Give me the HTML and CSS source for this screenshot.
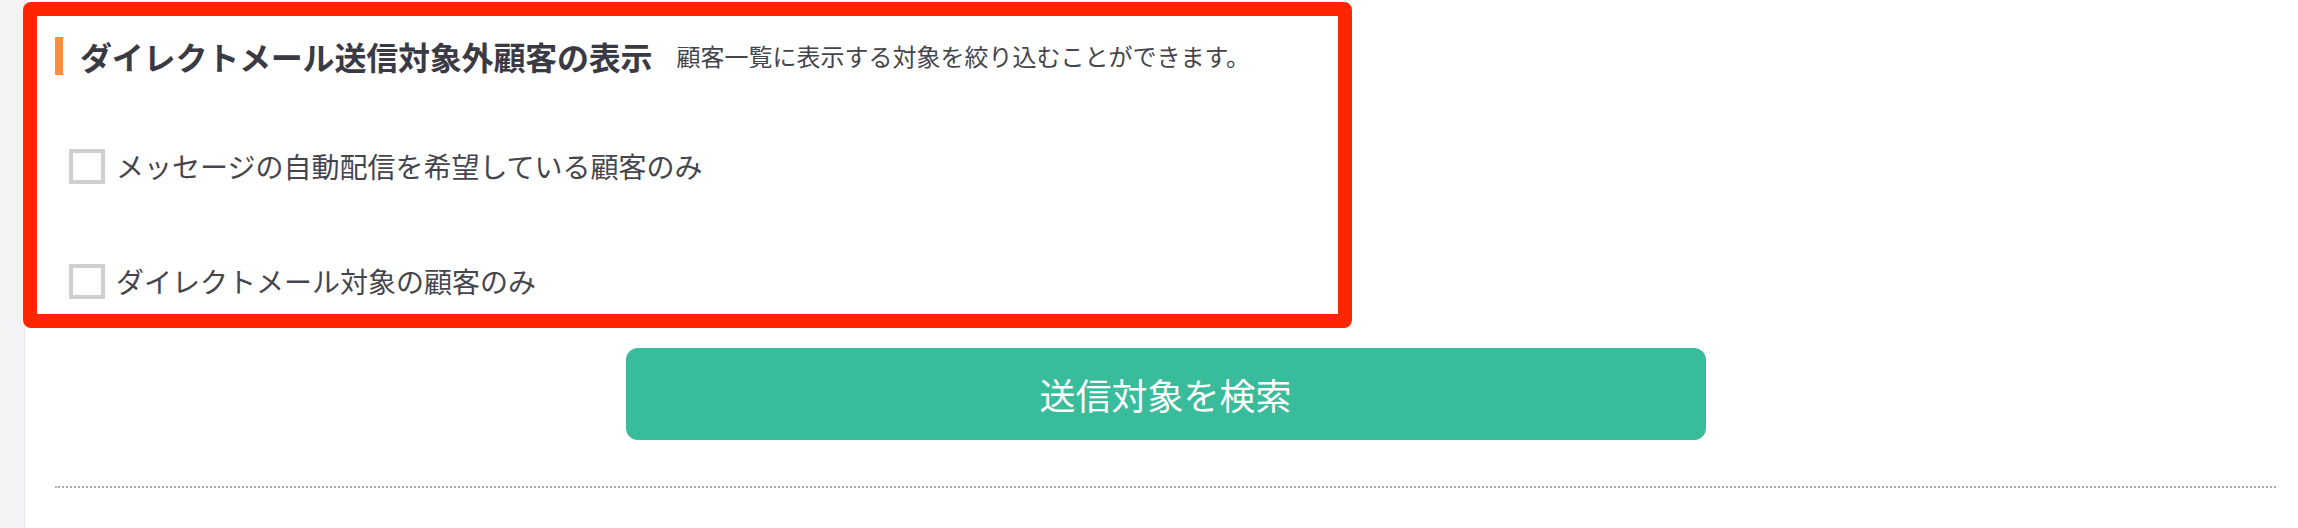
FILE: index.html
```html
<!DOCTYPE html>
<html lang="ja">
<head>
  <meta charset="UTF-8" />
  <meta name="viewport" content="width=device-width, initial-scale=1" />
  <title>顧客検索</title>
  <link rel="stylesheet" href="styles.css">
</head>
<body>

  <div class="page">
    <div class="side-strip"></div>

    <main class="main">
      <section class="filter-section">
        <div class="section-head">
          <span class="head-bar"></span>
          <h2 class="head-title">ダイレクトメール送信対象外顧客の表示</h2>
          <p class="head-note">顧客一覧に表示する対象を絞り込むことができます。</p>
        </div>

        <label class="check-row">
          <input type="checkbox" id="autoMessageOnly" />
          <span class="check-box"></span>
          <span class="check-text">メッセージの自動配信を希望している顧客のみ</span>
        </label>

        <label class="check-row">
          <input type="checkbox" id="directMailOnly" />
          <span class="check-box"></span>
          <span class="check-text">ダイレクトメール対象の顧客のみ</span>
        </label>

        <!-- annotation frame drawn over the section -->
        <div class="highlight-frame"></div>
      </section>

      <div class="search-wrap">
        <button class="search-btn" id="searchBtn">送信対象を検索</button>
      </div>

      <hr class="dotted-line" />
    </main>
  </div>

</body>
</html>
```

FILE: styles.css
```css
body {
  margin: 0;
  font-family: "Noto Sans CJK JP", "Noto Sans", sans-serif;
  background: #ffffff;
  color: #3d3d45;
}
.page {
  display: flex;
  min-height: 528px;
}
.side-strip {
  width: 24px;
  flex-shrink: 0;
  background: #f3f3f5;
  border-right: 1px solid #e6e6e9;
}
.main {
  flex: 1;
  padding: 0 22px 0 30px;
  background: #fff;
}
.filter-section {
  position: relative;
  padding-top: 37px;
}
.section-head {
  display: flex;
  align-items: center;
  height: 38px;
}
.head-bar {
  width: 8px;
  height: 38px;
  background: #ff8b3d;
  margin-right: 17px;
}
.head-title {
  margin: 0;
  font-size: 32px;
  font-weight: 700;
  line-height: 38px;
  color: #3a3a44;
  letter-spacing: -0.2px;
}
.head-note {
  margin: 0 0 0 24px;
  font-size: 24px;
  line-height: 38px;
  color: #45454d;
}
.check-row {
  display: flex;
  align-items: center;
  height: 40px;
  margin-left: 14px;
  cursor: pointer;
}
.section-head + .check-row {
  margin-top: 71px;
}
.check-row + .check-row {
  margin-top: 75px;
}
.check-row input {
  display: none;
}
.check-box {
  width: 36px;
  height: 35px;
  box-sizing: border-box;
  border: 4px solid #cfcfcf;
  background: #fff;
  margin-right: 11px;
}
.check-row input:checked + .check-box {
  background: #38bc9c;
  border-color: #38bc9c;
}
.check-text {
  font-size: 28px;
  line-height: 40px;
  color: #45454d;
}
.highlight-frame {
  position: absolute;
  left: -32px;
  top: 2px;
  width: 1329px;
  height: 326px;
  box-sizing: border-box;
  border: 14px solid #ff2600;
  border-radius: 8px;
  pointer-events: none;
}
.search-wrap {
  display: flex;
  justify-content: center;
  margin-top: 47px;
}
.search-btn {
  width: 1080px;
  height: 92px;
  border: none;
  border-radius: 12px;
  background: #38bc9c;
  color: #fff;
  font-family: "Noto Sans CJK JP", sans-serif;
  font-size: 36px;
  cursor: pointer;
}
.dotted-line {
  margin: 46px 0 0;
  border: none;
  border-top: 2px dotted #a8a8a8;
  height: 0;
}
```
